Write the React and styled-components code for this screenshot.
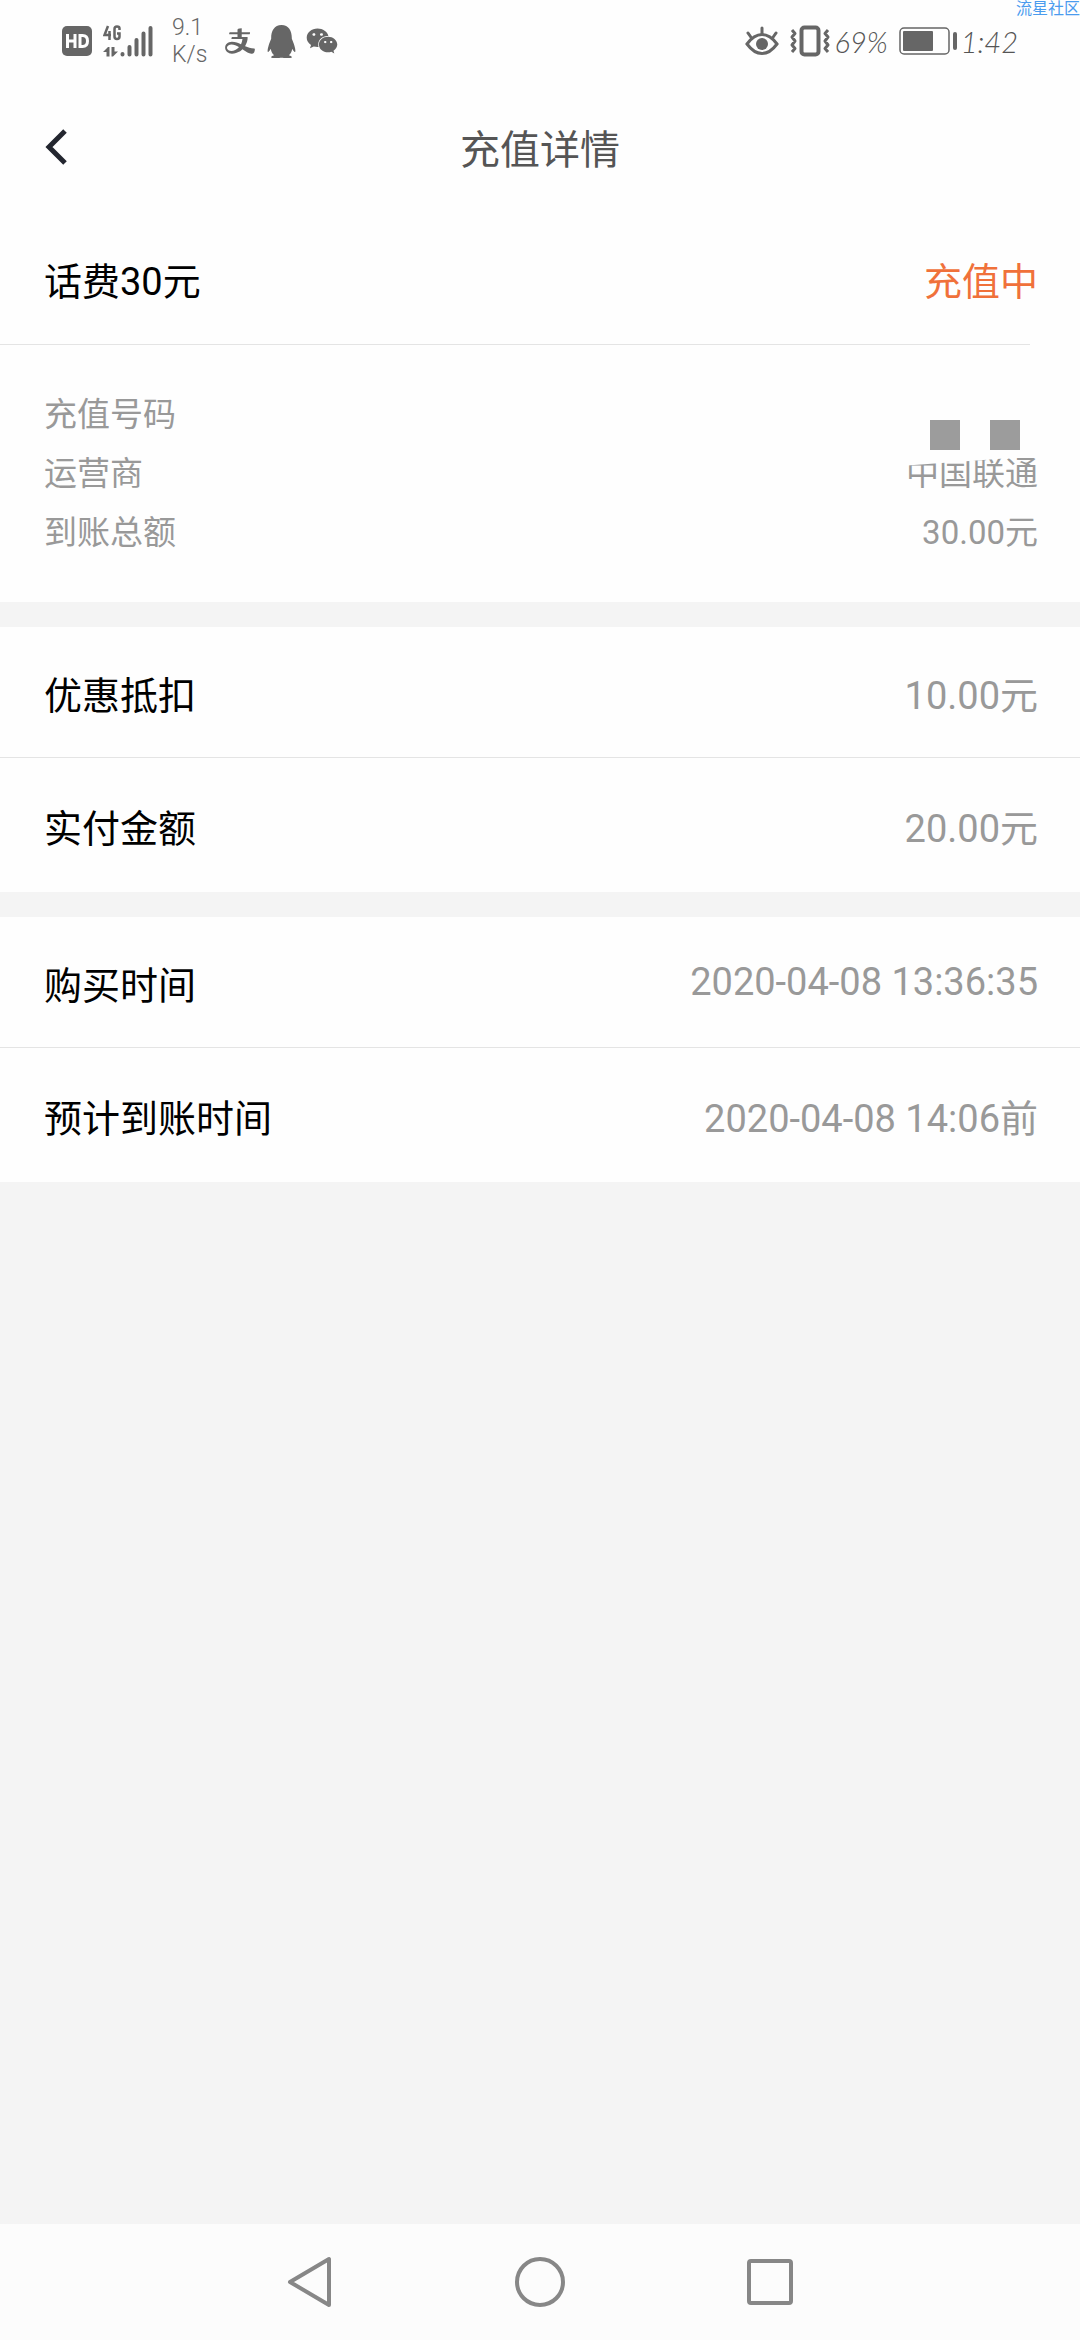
import React from 'react'
import styled, { createGlobalStyle, ThemeProvider } from 'styled-components'
import { AiOutlineAlipay } from 'react-icons/ai'
import { FaQq, FaWeixin } from 'react-icons/fa'

const theme = {
  white: '#fefefe',
  page: '#f4f4f4',
  line: '#e4e4e4',
  black: '#000',
  grey: '#999',
  status: '#666',
  accent: '#f0713a',
  side: '44px',
}

const GlobalStyle = createGlobalStyle`
  * {
    box-sizing: border-box;
  }
  body {
    margin: 0;
    font-family: Roboto, 'Noto Sans CJK SC', sans-serif;
    background: #f4f4f4;
  }
`

const Page = styled.div`
  position: relative;
  display: flex;
  flex-direction: column;
  min-height: 100vh;
  background: ${props => props.theme.page};
`

const Watermark = styled.span`
  position: absolute;
  top: 0;
  right: 0;
  font-size: 16px;
  line-height: 18px;
  color: #4a9bee;
`

const StatusBar = styled.div`
  display: flex;
  justify-content: space-between;
  height: 82px;
  padding: 0 62px;
  background: ${props => props.theme.white};
  color: ${props => props.theme.status};
`

const StatusGroup = styled.div`
  display: flex;
  align-items: center;
  gap: ${props => props.gap};
`

const Speed = styled.div`
  width: 40px;
  margin-left: 8px;
  font-size: 23px;
  font-weight: 300;
  line-height: 27px;
`

const Script = styled.span`
  font-family: Lato, 'Liberation Sans', sans-serif;
  font-size: 29px;
  font-style: italic;
  font-weight: 300;
  color: #555;
`

const TitleBar = styled.header`
  display: grid;
  grid-template-columns: 1fr auto 1fr;
  align-items: center;
  height: 130px;
  padding: 0 ${props => props.theme.side};
  background: ${props => props.theme.white};
`

const BackButton = styled.button`
  display: flex;
  justify-self: start;
  padding: 0;
  border: 0;
  background: none;
  color: #23262f;
  cursor: pointer;
`

const Title = styled.h1`
  margin: 0;
  font-size: 40px;
  font-weight: 400;
  color: #555;
`

const Card = styled.dl`
  margin: 0 0 25px;
  background: ${props => props.theme.white};
`

const Row = styled.div`
  display: flex;
  justify-content: space-between;
  align-items: center;
  height: ${props => (props.last ? '134px' : '131px')};
  padding: 0 42px 0 ${props => props.theme.side};
  border-bottom: ${props => (props.last ? 0 : '1px')} solid
    ${props => props.theme.line};
  font-size: 38px;
`

const Divider = styled.div`
  height: 1px;
  margin-right: 50px;
  background: ${props => props.theme.line};
`

const Label = styled.dt`
  color: ${props => props.theme.black};
`

const Value = styled.dd`
  margin: 0;
  color: ${props => (props.active ? props.theme.accent : props.theme.grey)};
`

const OrderRow = styled(Row)`
  height: 132px;
  border-bottom: 0;
`

const Details = styled.div`
  position: relative;
  padding: 40px 42px 40px ${props => props.theme.side};
`

const DetailRow = styled.div`
  display: flex;
  justify-content: space-between;
  height: 59px;
  font-size: 33px;
  line-height: 59px;
  dt {
    color: ${props => props.theme.grey};
  }
`

const Mosaic = styled.svg`
  position: absolute;
  top: 65px;
  right: 40px;
`

const NavBar = styled.nav`
  display: flex;
  justify-content: center;
  align-items: center;
  gap: 170px;
  height: 116px;
  margin-top: auto;
  background: #fcfcfc;
`

const NavButton = styled.button`
  display: flex;
  padding: 0;
  border: 0;
  background: none;
  color: #878787;
  cursor: pointer;
`

const HdIcon = () => (
  <svg width="30" height="30" viewBox="0 0 30 30">
    <rect width="30" height="30" rx="5" fill="currentColor" />
    <path
      d="M5.5 8v14M13 8v14M5.5 15H13M18 9.5h2.5q5 0 5 5.500t-5 5.500H18z"
      fill="none"
      stroke="#fff"
      strokeWidth="3"
    />
  </svg>
)

const SignalIcon = () => (
  <svg width="50" height="32" viewBox="0 0 50 32">
    <g fill="none" stroke="currentColor" strokeWidth="2.500">
      <path d="M5 1L1.500 10H8M6.500 6v9" />
      <path d="M16.500 5V3.500Q16.500 1.500 14 1.500T11.500 4v7.500q0 2.500 2.500 2.500t2.500-2.500V8.500H14" />
    </g>
    <path
      d="M0 27l5-5h1.500v9.500H3.500V27zM8.500 22h3v4.500H15l-5 5H8.500z"
      fill="currentColor"
    />
    <g stroke="currentColor" strokeWidth="4" strokeLinecap="round">
      <path d="M19.500 29v.5M26.500 22v7.500M33.500 15v14.500M40.500 8.500v21M47.500 3v26.500" />
    </g>
  </svg>
)

const EyeIcon = () => (
  <svg width="34" height="30" viewBox="0 0 34 30">
    <g fill="none" stroke="currentColor" strokeWidth="3" strokeLinecap="round">
      <path d="M2 18Q9 8.500 17 8.500T32 18Q25 27.500 17 27.500T2 18z" />
      <path d="M17 8V2M6.500 12L3 7M27.500 12L31 7" />
    </g>
    <circle cx="17" cy="18" r="6" fill="currentColor" />
  </svg>
)

const VibrateIcon = () => (
  <svg width="40" height="32" viewBox="0 0 40 32">
    <g fill="none" stroke="currentColor" strokeLinejoin="round">
      <rect x="11.500" y="2.500" width="17" height="27" rx="3" strokeWidth="4" />
      <path
        d="M2 5l3 3.500-3 3.500 3 4-3 4 3 3.500L2 27M38 5l-3 3.500 3 3.500-3 4 3 4-3 3.500 3 3.500"
        strokeWidth="3"
      />
    </g>
  </svg>
)

const BatteryIcon = () => (
  <svg width="58" height="28" viewBox="0 0 58 28">
    <rect
      x="1"
      y="1"
      width="49"
      height="26"
      rx="4"
      fill="none"
      stroke="currentColor"
      strokeWidth="1.500"
    />
    <rect x="4" y="4" width="30" height="20" rx="1" fill="currentColor" />
    <rect x="54" y="5" width="4" height="18" rx="2" fill="currentColor" />
  </svg>
)

const BackIcon = () => (
  <svg width="26" height="36" viewBox="0 0 26 36">
    <path
      d="M21 2L5 18l16 16"
      fill="none"
      stroke="currentColor"
      strokeWidth="5"
    />
  </svg>
)

const NavIcon = ({ children }) => (
  <svg
    width="60"
    height="60"
    viewBox="0 0 60 60"
    fill="none"
    stroke="currentColor"
    strokeWidth="4"
    strokeLinejoin="round"
  >
    {children}
  </svg>
)

const orders = [
  [
    { label: '优惠抵扣', value: '10.00元' },
    { label: '实付金额', value: '20.00元' },
  ],
  [
    { label: '购买时间', value: '2020-04-08 13:36:35' },
    { label: '预计到账时间', value: '2020-04-08 14:06前' },
  ],
]

const details = [
  { label: '充值号码', value: '' },
  { label: '运营商', value: '中国联通' },
  { label: '到账总额', value: '30.00元' },
]

export default function App() {
  return (
    <ThemeProvider theme={theme}>
      <GlobalStyle />
      <Page>
        <StatusBar>
          <StatusGroup gap="11px">
            <HdIcon />
            <SignalIcon />
            <Speed>
              9.1
              <br />
              K/s
            </Speed>
            <StatusGroup gap="8px">
              <AiOutlineAlipay size={34} />
              <FaQq size={33} />
              <FaWeixin size={32} />
            </StatusGroup>
          </StatusGroup>
          <StatusGroup gap="11px">
            <EyeIcon />
            <StatusGroup gap="4px">
              <VibrateIcon />
              <Script>69%</Script>
            </StatusGroup>
            <StatusGroup gap="4px">
              <BatteryIcon />
              <Script>1:42</Script>
            </StatusGroup>
          </StatusGroup>
        </StatusBar>
        <Watermark>流星社区</Watermark>

        <TitleBar>
          <BackButton type="button" aria-label="返回">
            <BackIcon />
          </BackButton>
          <Title>充值详情</Title>
        </TitleBar>

        <Card>
          <OrderRow>
            <Label>话费30元</Label>
            <Value active>充值中</Value>
          </OrderRow>
          <Divider />
          <Details>
            {details.map(item => (
              <DetailRow key={item.label}>
                <dt>{item.label}</dt>
                <Value>{item.value}</Value>
              </DetailRow>
            ))}
            {/* hides the phone number */}
            <Mosaic width="140" height="60" viewBox="0 0 140 60">
              <path d="M0 0h140v46L0 56z" fill={theme.white} />
              <path d="M30 10h30v30H30zM90 10h30v30H90z" fill="#9c9c9c" />
            </Mosaic>
          </Details>
        </Card>

        {orders.map(rows => (
          <Card key={rows[0].label}>
            {rows.map((item, i) => (
              <Row key={item.label} last={i === rows.length - 1}>
                <Label>{item.label}</Label>
                <Value>{item.value}</Value>
              </Row>
            ))}
          </Card>
        ))}

        <NavBar>
          <NavButton type="button" aria-label="返回上一页">
            <NavIcon>
              <path d="M49 7v46L10 30z" />
            </NavIcon>
          </NavButton>
          <NavButton type="button" aria-label="主屏幕">
            <NavIcon>
              <circle cx="30" cy="30" r="23" />
            </NavIcon>
          </NavButton>
          <NavButton type="button" aria-label="最近任务">
            <NavIcon>
              <rect x="9" y="9" width="42" height="42" rx="2" />
            </NavIcon>
          </NavButton>
        </NavBar>
      </Page>
    </ThemeProvider>
  )
}
